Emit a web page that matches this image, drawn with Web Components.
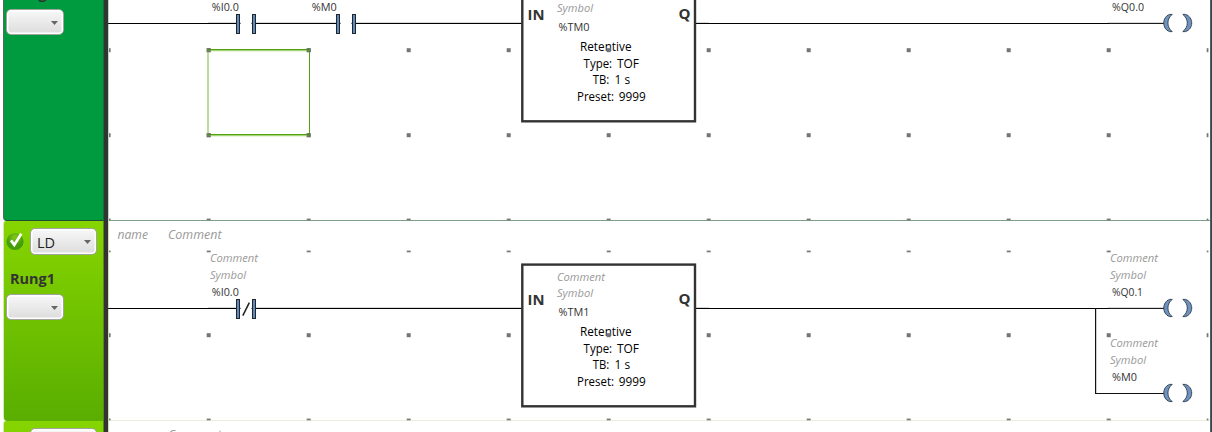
<!DOCTYPE html>
<html lang="en"><head><meta charset="utf-8"><title>Ladder editor</title>
<style>html,body{margin:0;height:100%;overflow:hidden;background:#fff}</style></head>
<body>
<ladder-editor>
  <ladder-rung name="Rung0" height="285" rows="114,199,283" tone="active" wire="1164">
    <ladder-contact style="left:208px;top:64px" tag="%I0.0" w="27"></ladder-contact>
    <ladder-contact style="left:308px;top:64px" tag="%M0" w="25"></ladder-contact>
    <timer-block style="left:521px;top:42px" tag="%TM0" cut></timer-block>
    <ladder-coil style="left:1108px;top:64px" tag="%Q0.0" w="32"></ladder-coil>
    <cell-cursor style="left:207px;top:113px"></cell-cursor>
  </ladder-rung>
  <ladder-rung name="Rung1" height="200" rows="30,114,198" lang="LD" caption="name" comment="Comment" wire="1164" branch>
    <ladder-contact style="left:208px;top:64px" tag="%I0.0" w="27" notes negated></ladder-contact>
    <timer-block style="left:521px;top:42px" tag="%TM1"></timer-block>
    <ladder-coil style="left:1108px;top:64px" tag="%Q0.1" w="31" notes></ladder-coil>
    <ladder-coil style="left:1108px;top:149px" tag="%M0" w="25" notes></ladder-coil>
  </ladder-rung>
  <ladder-rung height="200" rows="" lang=" " comment="Comment" last></ladder-rung>
</ladder-editor>
<script>
const FONT = '"Open Sans","Noto Sans",sans-serif';
const text = (x, y, w, size, s, cls = '') =>
  `<text class="${cls}" x="${x}" y="${y}" textLength="${w}" lengthAdjust="spacingAndGlyphs" font-size="${size}">${s}</text>`;
const base = `svg{display:block;overflow:visible;font-family:${FONT}} .note{font-style:italic;fill:#999} .tag{fill:#333} .b{font-weight:700;fill:#333}`;
const make = (host, css, html) => { host.attachShadow({mode:'open'}).innerHTML = `<style>${base}${css}</style>${html}`; };
const notes = text(2, -23, 48, 11.5, 'Comment', 'note') + text(2, -6, 36, 11.5, 'Symbol', 'note');

customElements.define('ladder-editor', class extends HTMLElement {
  connectedCallback() {
    make(this, `:host{display:flex;height:432px;overflow:hidden;background:#fff}
      main{flex:1;display:flex;flex-direction:column;margin-top:-64px;min-width:0;overflow:hidden}
      i{flex:0 0 2px;background:linear-gradient(90deg,#5b6b68,#263f3e)}`,
      '<main><slot></slot></main><i></i>');
  }
});

customElements.define('drop-down', class extends HTMLElement {
  connectedCallback() {
    make(this, `:host{display:flex;box-sizing:border-box;align-items:center;justify-content:space-between;border:1px solid #a0a49c;border-radius:5px;
      box-shadow:inset 0 0 0 1.5px #fff;background:linear-gradient(#f8f8f8,#dcdcdc);font:14.5px ${FONT};color:#222;padding:1px 5.5px 0 6px}
      .arrow{flex:none}`,
      `<span><slot></slot></span><svg class="arrow" width="7" height="4"><path d="M0 0h7L3.5 4z" fill="#666"/></svg>`);
  }
});

customElements.define('rung-header', class extends HTMLElement {
  connectedCallback() {
    const name = this.getAttribute('name'), lang = this.getAttribute('lang'), active = this.getAttribute('tone') === 'active';
    const bg = active ? '#009b3e' : 'linear-gradient(#86d500,#59ae00)';
    make(this, `:host{display:flex;flex:0 0 109px;box-sizing:border-box;padding-left:3px}
      .panel{flex:1;box-sizing:border-box;background:${bg};border-left:1px solid ${active ? '#526b5b' : '#d5edaa'};border-radius:3px 0 0 4px;
        border-bottom:${active ? '1px solid #224b35' : '0'};padding:7px 0 0 2px}
      .row{display:flex;align-items:center;gap:6px;height:27px}
      .row svg{position:relative;top:-1px}
      .row drop-down{width:67px;height:27px}
      .name{display:block;margin:20px 0 0 4px;height:19px}
      .small{width:58px;height:26px}
      .edge{flex:0 0 4px;background:#333}
      .left{flex:0 0 1px;background:${active ? '#126f38' : '#548c16'}}
      .right{flex:0 0 1px;background:${active ? '#b8d8c4' : '#cedab6'}}`,
      `<div class="panel"><div class="row"><svg width="18" height="18" viewBox="0 0 18 18">
        <defs><radialGradient id="g" cy=".25"><stop stop-color="#83c818"/><stop offset="1" stop-color="#459d0d"/></radialGradient></defs>
        <circle cx="9" cy="9.5" r="8.6" fill="url(#g)"/><path d="M5 8.4l3.3 4.5L15.3 1.7" fill="none" stroke="#fff" stroke-width="2.7"/></svg>
        ${lang ? `<drop-down>${lang}</drop-down>` : ''}</div>
        ${name ? `<svg class="name" width="60" height="19">${text(0, 9, 45, 14.7, name, 'b')}</svg><drop-down class="small"></drop-down>` : ''}</div>
       <div class="left"></div><div class="edge"></div><div class="right"></div>`);
  }
});

customElements.define('ladder-rung', class extends HTMLElement {
  connectedCallback() {
    const a = n => this.getAttribute(n) || '';
    const h = +a('height'), active = a('tone') === 'active';
    let g = '';
    if (a('wire')) {
      g += `<rect x="108" y="87" width="1056" height="1" fill="#1c1c1c"/><rect x="208" y="86" width="314" height="1" fill="#000" opacity=".15"/>`;
      g += `<rect x="695" y="86" width="14" height="1" opacity=".15"/><rect x="1108" y="86" width="56" height="1" opacity=".15"/>`;
      g += `<rect x="109" y="87" width="1000" height="1"/>`;
    }
    if (this.hasAttribute('branch')) g += `<path d="M1095.6 87v85.5H1164" fill="none" stroke="#111" stroke-width="1.2"/>`;
    for (const y of a('rows').split(',').filter(Boolean).map(Number)) {
      const flat = y < 60 || y > h - 5;
      for (let i = 0; i < 12; i++) {
        const x = i === 0 ? 109 : 106.7 + i * 100;
        const w = i === 0 ? 1.6 : i === 11 ? 1.7 : 4;
        g += flat ? `<rect x="${x}" y="${y - .4}" width="${w}" height="1.7" fill="#777"/>`
                  : `<rect x="${x}" y="${y - 1.8}" width="${w}" height="4" fill="#757575"/>`;
      }
    }
    if (a('caption')) g += text(117.5, 18, 30.5, 13.2, a('caption'), 'note');
    if (a('comment')) g += text(168, 18, 53.5, 13.2, a('comment'), 'note');
    make(this, `:host{display:flex;flex:none;position:relative;height:${h}px;overflow:hidden}
      .canvas{flex:1;border-bottom:1px solid ${active ? '#7f9e89' : '#e9efd8'}}
      .grid,::slotted(*){position:absolute} .grid{left:0;top:0;z-index:3}`,
      `<rung-header name="${a('name')}" lang="${a('lang')}" tone="${a('tone')}"></rung-header>
       <div class="canvas"></div><svg class="grid" width="1210" height="${h}">${g}</svg><slot></slot>`);
  }
});

customElements.define('ladder-contact', class extends HTMLElement {
  connectedCallback() {
    const bar = x => `<rect x="${x}" y="14.5" width="3" height="19" fill="#6389ba" stroke="#20262e" stroke-width="1"/>`;
    make(this, `:host{display:block;z-index:4}`,
      `<svg width="50" height="34">${this.hasAttribute('notes') ? notes : ''}${text(3.8, 11, this.getAttribute('w'), 10.9, this.getAttribute('tag'), 'tag')}
      <rect x="32.5" y="21" width="11" height="4" fill="#fff"/>${bar(28.5)}${bar(44.5)}
      ${this.hasAttribute('negated') ? '<path d="M34.8 30.7L41.3 17.6" stroke="#222" stroke-width="1.5"/>' : ''}</svg>`);
  }
});

customElements.define('ladder-coil', class extends HTMLElement {
  connectedCallback() {
    make(this, `:host{display:block;z-index:4}`,
      `<svg width="86" height="34">${this.hasAttribute('notes') ? notes : ''}${text(4, 11, this.getAttribute('w'), 10.9, this.getAttribute('tag'), 'tag')}
      <g fill="#6f93bf" stroke="#2c3947" stroke-width=".9"><path d="M61.5 14.4C53.8 17 53.8 29 61.5 31.6H64.2C58.5 27 58.5 19 64.2 14.4z"/>
      <path d="M77.5 14.4C85.8 17 85.8 29 77.5 31.6H74.8C80.8 27 80.8 19 74.8 14.4z"/></g></svg>`);
  }
});

customElements.define('timer-block', class extends HTMLElement {
  connectedCallback() {
    const t = this.getAttribute('tag');
    make(this, `:host{display:block;z-index:3}`,
      `<svg width="175" height="144"><rect x="1.3" y="1.6" width="172.7" height="141.7" fill="#fff" stroke="#333" stroke-width="2.4"/>
      ${this.hasAttribute('cut') ? '' : text(36, 18, 48, 11.5, 'Comment', 'note')}${text(36, 34, 36, 11.5, 'Symbol', 'note')}
      ${text(37.5, 52.5, 31, 10.9, t, 'tag')}${text(6.5, 41.8, 17, 14.6, 'IN', 'b')}${text(157.5, 41.3, 12, 14.2, 'Q', 'b')}
      ${text(59, 73, 51.5, 12.5, 'Retentive')}${text(62.6, 90, 28.5, 12.5, 'Type:')}${text(96, 90, 22, 12.5, 'TOF')}
      ${text(71.8, 106, 16.5, 12.5, 'TB:')}${text(93.6, 106, 15.6, 12.5, '1 s')}${text(56, 123, 37, 12.5, 'Preset:')}${text(97.7, 123, 27, 12.5, '9999')}
      <rect x="85.7" y="70.2" width="4" height="4" fill="#757575"/></svg>`);
  }
});

customElements.define('cell-cursor', class extends HTMLElement {
  connectedCallback() {
    make(this, `:host{display:block;z-index:5}`,
      `<svg width="104" height="88"><path d="M1 87V0M1 86.4H102.6M1 1.4H102" fill="none" stroke="#a3d47a" stroke-width="1.5"/>
      <path d="M1 .5H102.5V87M1 85.5H102" fill="none" stroke="#50a010" stroke-width="1"/>
      ${[[-.3,-.8],[99.7,-.8],[-.3,84.2],[99.7,84.2]].map(([x,y]) => `<rect x="${x}" y="${y}" width="4" height="4" fill="#607850" opacity=".85"/>`).join('')}</svg>`);
  }
});
</script>
</body></html>
